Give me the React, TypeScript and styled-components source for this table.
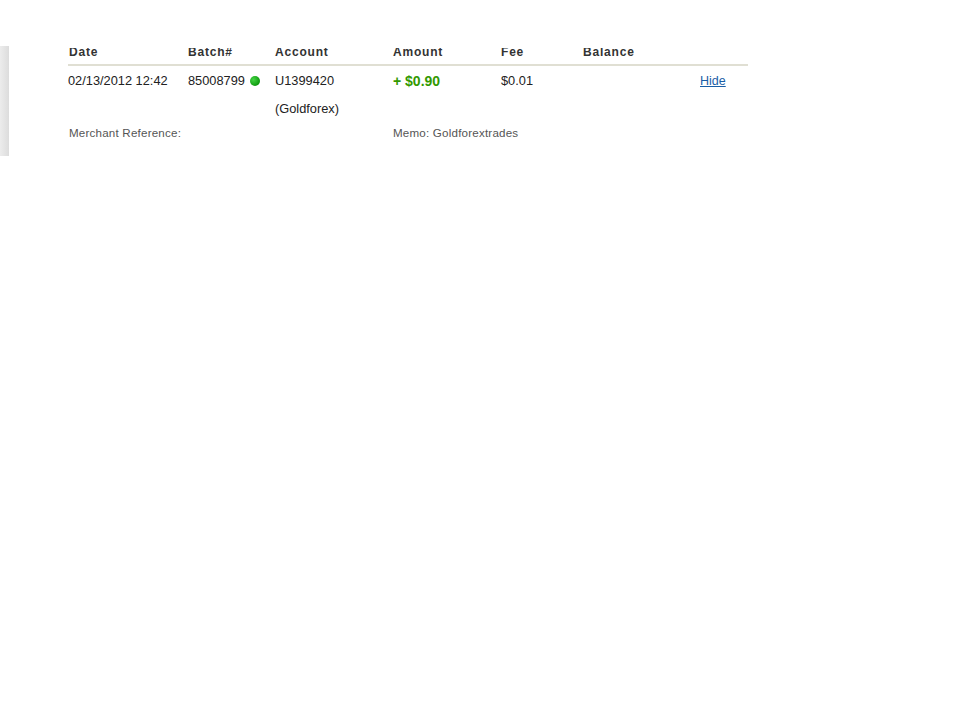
import styled, { createGlobalStyle } from 'styled-components';

const GlobalStyle = createGlobalStyle`
  html, body {
    margin: 0;
    padding: 0;
    background: #ffffff;
  }

  body {
    font-family: 'Liberation Sans', Arial, sans-serif;
    color: #222222;
  }
`;

const Page = styled.div`
  display: flex;
  align-items: flex-start;
`;

const SideBar = styled.div`
  width: 9px;
  height: 110px;
  margin-top: 46px;

  background: linear-gradient(to right, #ececec, #dcdcdc);
`;

const Frame = styled.div`
  width: 690px;
  margin-top: 48px;
  margin-left: 59px;

  overflow: hidden;
`;

const Table = styled.div`
  display: grid;
  grid-template-columns: 120px 87px 118px 108px 82px 117px 48px;
  width: 680px;
  margin-top: -3px;
`;

const HeaderCell = styled.div<{ $indent: number }>`
  padding: 0 0 5px ${(p): number => p.$indent}px;

  font-size: 12px;
  font-weight: bold;
  line-height: 14px;
  letter-spacing: 0.8px;
  color: #333333;

  border-bottom: 2px solid #e0dfd3;
`;

const Cell = styled.div<{ $top: number; $bottom: number }>`
  display: flex;
  align-items: center;
  gap: 5px;

  padding: ${(p): string => `${p.$top}px 0 ${p.$bottom}px 0`};

  font-size: 12.8px;
  line-height: 16px;
  color: #222222;
`;

const Amount = styled.span`
  font-size: 14px;
  font-weight: bold;
  color: #339900;
`;

const StatusDot = styled.span`
  display: inline-block;
  width: 10px;
  height: 10px;

  border-radius: 50%;
  background: radial-gradient(circle at 35% 35%, #44d444, #0f9a0f 70%);
`;

const HideLink = styled.a`
  font-size: 12.5px;
  color: #1a5ea6;
  text-decoration: underline;
  cursor: pointer;
`;

const NoteCell = styled.div<{ $span: string; $indent: number }>`
  grid-column: ${(p): string => p.$span};

  padding: 5px 0 0 ${(p): number => p.$indent}px;

  font-size: 11.6px;
  line-height: 14px;
  letter-spacing: 0.2px;
  color: #555555;
`;

const columns = ['Date', 'Batch#', 'Account', 'Amount', 'Fee', 'Balance', ''];

export default function App(): JSX.Element {
  return (
    <Page>
      <GlobalStyle />
      <SideBar />

      <Frame>
        <Table>
          {columns.map((title, i) => (
            <HeaderCell key={i} $indent={i === 0 ? 1 : 0}>
              {title}
            </HeaderCell>
          ))}

          <Cell $top={7} $bottom={6}>02/13/2012 12:42</Cell>
          <Cell $top={7} $bottom={6}>
            85008799 <StatusDot />
          </Cell>
          <Cell $top={7} $bottom={6}>U1399420</Cell>
          <Cell $top={7} $bottom={6}>
            <Amount>+ $0.90</Amount>
          </Cell>
          <Cell $top={7} $bottom={6}>$0.01</Cell>
          <Cell $top={7} $bottom={6} />
          <Cell $top={7} $bottom={6}>
            <HideLink>Hide</HideLink>
          </Cell>

          <Cell $top={6} $bottom={4} />
          <Cell $top={6} $bottom={4} />
          <Cell $top={6} $bottom={4}>(Goldforex)</Cell>
          <Cell $top={6} $bottom={4} />
          <Cell $top={6} $bottom={4} />
          <Cell $top={6} $bottom={4} />
          <Cell $top={6} $bottom={4} />

          <NoteCell $span="1 / 4" $indent={1}>
            Merchant Reference:
          </NoteCell>
          <NoteCell $span="4 / 8" $indent={0}>
            Memo: Goldforextrades
          </NoteCell>
        </Table>
      </Frame>
    </Page>
  );
}
